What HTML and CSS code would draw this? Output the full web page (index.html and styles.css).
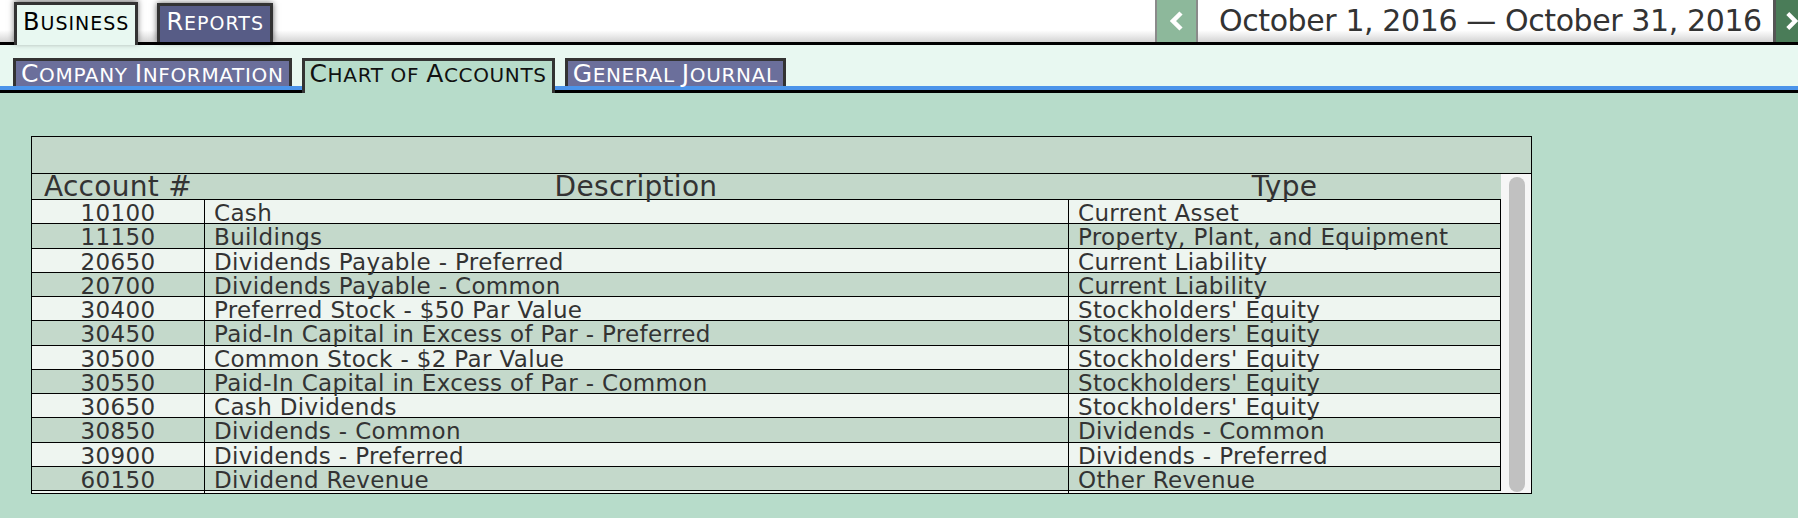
FILE: index.html
```html
<!DOCTYPE html>
<html lang="en">
<head>
    <meta charset="UTF-8">
    <title>Chart of Accounts</title>
    <link rel="stylesheet" href="styles.css">
</head>
<body>
    <header class="topbar">
        <nav class="main-tabs">
            <a class="main-tab active"><span class="ini">B</span>usiness</a>
            <a class="main-tab"><span class="ini">R</span>eports</a>
        </nav>
        <div class="period">
            <button class="period-btn prev">
                <svg width="14" height="20" viewBox="0 0 14 20"><polyline points="11,2 3,10 11,18" fill="none" stroke="#fff" stroke-width="4.5"/></svg>
            </button>
            <div class="period-range">October 1, 2016 — October 31, 2016</div>
            <button class="period-btn next">
                <svg width="14" height="20" viewBox="0 0 14 20"><polyline points="3,2 11,10 3,18" fill="none" stroke="#fff" stroke-width="4.5"/></svg>
            </button>
        </div>
    </header>

    <nav class="sub-tabs">
        <a class="sub-tab"><span class="ini">C</span>ompany <span class="ini">I</span>nformation</a>
        <a class="sub-tab active"><span class="ini">C</span>hart of <span class="ini">A</span>ccounts</a>
        <a class="sub-tab"><span class="ini">G</span>eneral <span class="ini">J</span>ournal</a>
    </nav>

    <main class="content">
        <div class="panel">
            <div class="panel-title"></div>
            <div class="panel-body">
                <div class="accounts">
                    <div class="acc-head">
                        <div>Account #</div>
                        <div>Description</div>
                        <div>Type</div>
                    </div>
                    <div class="acc-row"><div class="num">10100</div><div class="txt">Cash</div><div class="txt">Current Asset</div></div>
                    <div class="acc-row"><div class="num">11150</div><div class="txt">Buildings</div><div class="txt">Property, Plant, and Equipment</div></div>
                    <div class="acc-row"><div class="num">20650</div><div class="txt">Dividends Payable - Preferred</div><div class="txt">Current Liability</div></div>
                    <div class="acc-row"><div class="num">20700</div><div class="txt">Dividends Payable - Common</div><div class="txt">Current Liability</div></div>
                    <div class="acc-row"><div class="num">30400</div><div class="txt">Preferred Stock - $50 Par Value</div><div class="txt">Stockholders' Equity</div></div>
                    <div class="acc-row"><div class="num">30450</div><div class="txt">Paid-In Capital in Excess of Par - Preferred</div><div class="txt">Stockholders' Equity</div></div>
                    <div class="acc-row"><div class="num">30500</div><div class="txt">Common Stock - $2 Par Value</div><div class="txt">Stockholders' Equity</div></div>
                    <div class="acc-row"><div class="num">30550</div><div class="txt">Paid-In Capital in Excess of Par - Common</div><div class="txt">Stockholders' Equity</div></div>
                    <div class="acc-row"><div class="num">30650</div><div class="txt">Cash Dividends</div><div class="txt">Stockholders' Equity</div></div>
                    <div class="acc-row"><div class="num">30850</div><div class="txt">Dividends - Common</div><div class="txt">Dividends - Common</div></div>
                    <div class="acc-row"><div class="num">30900</div><div class="txt">Dividends - Preferred</div><div class="txt">Dividends - Preferred</div></div>
                    <div class="acc-row"><div class="num">60150</div><div class="txt">Dividend Revenue</div><div class="txt">Other Revenue</div></div>
                </div>
                <div class="scroll">
                    <div class="scroll-thumb"></div>
                </div>
            </div>
        </div>
    </main>
</body>
</html>
```

FILE: styles.css
```css
html, body {
    overflow: hidden;
}

body {
    margin: 0;
    font-family: 'DejaVu Sans', Verdana, sans-serif;
    background-color: #b7dcca;
    color: #333;
}

/* top bar */

.topbar {
    display: flex;
    height: 42px;
    background: linear-gradient(to bottom, #fff 0%, #fff 72%, #d4d4d4 100%);
    border-bottom: 3px solid #000;
}

.main-tabs {
    display: flex;
    align-items: flex-end;
    gap: 19px;
    padding-left: 14px;
}

.main-tab {
    position: relative;
    height: 36px;
    padding: 0 6px;
    border: 3px solid #333;
    border-bottom: none;
    background-color: #575c86;
    color: #fff;
    box-shadow: 0 0 6px rgba(0, 0, 0, 0.6);
    font-size: 19px;
    line-height: 33px;
    letter-spacing: 1px;
    text-transform: uppercase;
}

.main-tab .ini {
    font-size: 24px;
}

.main-tab.active {
    height: 40px;
    margin-bottom: -3px;
    line-height: 35px;
    background-color: #e8f8f1;
    color: #000;
    box-shadow: 0 -2px 6px rgba(0, 0, 0, 0.5);
}

.period {
    display: flex;
    margin-left: auto;
}

.period-btn {
    display: flex;
    align-items: center;
    justify-content: center;
    height: 42px;
    padding: 0;
    border: none;
    overflow: hidden;
}

.period-btn.prev {
    width: 43px;
    background-color: #8db89b;
    border-left: 2px solid #8a8a8a;
    border-right: 2px solid #8a8a8a;
}

.period-btn.next {
    width: 25px;
    justify-content: flex-start;
    padding-left: 9px;
    background-color: #4a7c58;
    border-left: 3px solid #555;
}

.period-range {
    width: 554px;
    padding-left: 21px;
    font-size: 30px;
    line-height: 42px;
    letter-spacing: -0.4px;
    color: #333;
    white-space: nowrap;
}

/* second row of tabs */

.sub-tabs {
    display: flex;
    align-items: flex-end;
    gap: 10px;
    height: 41px;
    padding-left: 13px;
    background-color: #e8f8f1;
    border-bottom: 4px solid #4b94ea;
}

.sub-tab {
    position: relative;
    height: 25px;
    padding: 0 5px;
    border: 3px solid #333;
    border-bottom: none;
    background-color: #6b6f9b;
    color: #fff;
    font-size: 20px;
    line-height: 25px;
    letter-spacing: 0.65px;
    text-transform: uppercase;
    white-space: nowrap;
}

.sub-tab .ini {
    font-size: 25px;
}

.sub-tab.active {
    height: 32px;
    margin-bottom: -7px;
    background-color: #b7dcca;
    color: #111;
}

/* chart of accounts panel */

.content {
    border-top: 3px solid #000;
    padding: 43px 0 0 31px;
}

.panel {
    width: 1501px;
    box-sizing: border-box;
    border: 1px solid #000;
    background-color: #eef5f0;
}

.panel-title {
    height: 36px;
    background-color: #c3d8ca;
    border-bottom: 1px solid #000;
}

.panel-body {
    display: flex;
}

.accounts {
    flex: 1;
    padding-bottom: 2px;
}

.acc-head,
.acc-row {
    display: grid;
    grid-template-columns: 172px 864px 1fr;
    box-sizing: border-box;
}

.acc-head {
    height: 26px;
    background-color: #c3d8ca;
    border-bottom: 1px solid #000;
    font-size: 28px;
    line-height: 26px;
    letter-spacing: 0.3px;
    text-align: center;
}

.acc-row {
    height: 24.25px;
    border-bottom: 1px solid #000;
    border-right: 1px solid #000;
    font-size: 23px;
    line-height: 26px;
    letter-spacing: 0.35px;
    white-space: nowrap;
}

.acc-row:nth-child(odd) {
    background-color: #c4d9cb;
}

.acc-row:nth-child(even) {
    background-color: #eef5f0;
}

.acc-row .num {
    text-align: center;
}

.acc-row .txt {
    padding-left: 9px;
    border-left: 1px solid #000;
}

.scroll {
    display: flex;
    flex-direction: column;
    width: 30px;
    box-sizing: border-box;
    padding: 3px 6px 1px 8px;
    background-color: #f6f6f6;
}

.scroll-thumb {
    flex: 1;
    border-radius: 8px;
    background-color: #c1c1c1;
}
```
